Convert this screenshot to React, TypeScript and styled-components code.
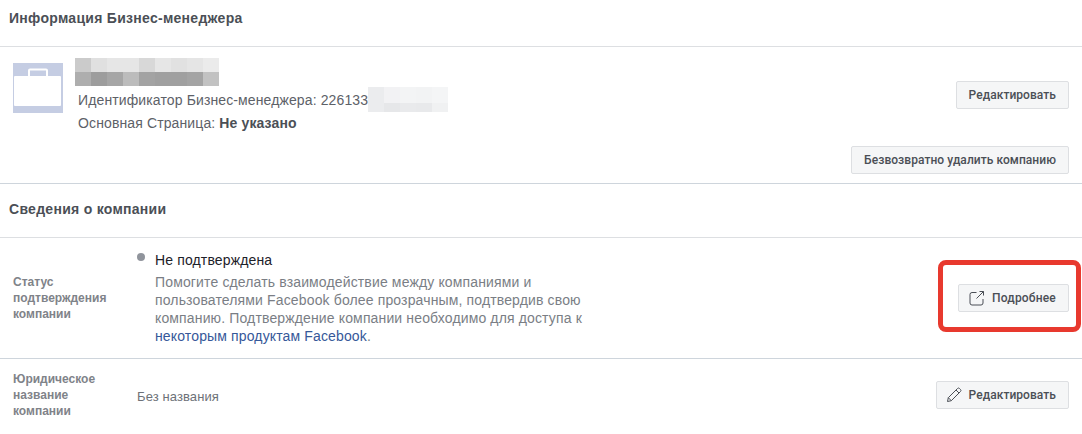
import {createGlobalStyle, styled} from 'styled-components';

const GlobalStyle = createGlobalStyle`
  html, body {
    margin: 0;
    padding: 0;
    background: #fff;
    overflow: hidden;
  }
  body {
    font-family: 'Liberation Sans', Arial, sans-serif;
    color: #4b4f56;
  }
`;

const Page = styled.div`
  width: 1082px;
  height: 434px;
  overflow: hidden;
`;

const SectionHeader = styled.div<{$height: number; $lift: number}>`
  height: ${({$height}) => $height}px;
  padding: 0 9px ${({$lift}) => $lift}px;
  display: flex;
  align-items: center;
  box-sizing: border-box;
  border-bottom: 1px solid #dddfe2;
  font-size: 14px;
  font-weight: 700;
  letter-spacing: 0.28px;
  color: #4b4f56;
`;

const InfoBlock = styled.div`
  height: 137px;
  box-sizing: border-box;
  border-bottom: 1px solid #ced5dc;
  padding: 11px 13px 0;
  display: flex;
  flex-direction: column;
`;

const InfoTop = styled.div`
  display: flex;
  align-items: flex-start;
`;

const Avatar = styled.div`
  width: 50px;
  height: 50px;
  margin-top: 5px;
  background: #c5cde3;
  display: flex;
  flex: none;
`;

const InfoText = styled.div`
  margin-left: 12px;
  flex: 1;
`;

const Mosaic = styled.div`
  display: flex;
  flex-direction: column;
  margin-bottom: 2px;
`;

const MosaicRow = styled.div`
  display: flex;
  height: 14px;
`;

const MosaicCell = styled.div<{$color: string}>`
  width: 16px;
  height: 100%;
  background: ${({$color}) => $color};
`;

const InfoLine = styled.div`
  margin-left: 3px;
  height: 23px;
  display: flex;
  align-items: center;
  font-size: 14px;
  letter-spacing: 0.12px;
  color: #5d6168;
  white-space: pre;

  b {
    font-weight: 700;
    color: #4b4f56;
  }
`;

const IdMask = styled.div`
  display: flex;
  flex-direction: column;
  margin-top: -1px;
`;

const MaskRow = styled.div<{$height: number}>`
  display: flex;
  height: ${({$height}) => $height}px;
`;

const MaskCell = styled.div<{$color: string}>`
  width: 16px;
  height: 100%;
  background: ${({$color}) => $color};
`;

const EditSlot = styled.div`
  margin-top: 23px;
  flex: none;
`;

const DeleteRow = styled.div`
  margin-top: 12px;
  display: flex;
  justify-content: flex-end;
`;

const Button = styled.div`
  height: 28px;
  box-sizing: border-box;
  padding: 0 12px;
  display: inline-flex;
  align-items: center;
  background: #f5f6f7;
  border: 1px solid #dddfe2;
  border-radius: 2px;
  font-family: Roboto, 'Liberation Sans', sans-serif;
  font-size: 12px;
  font-weight: 500;
  letter-spacing: 0.06px;
  color: #4b4f56;
  white-space: nowrap;
`;

const IconButton = styled(Button)<{$gap: number; $left: number; $spacing: number}>`
  gap: ${({$gap}) => $gap}px;
  padding-left: ${({$left}) => $left}px;
  letter-spacing: ${({$spacing}) => $spacing}px;
`;

const Row = styled.div<{$height: number; $border?: boolean}>`
  height: ${({$height}) => $height}px;
  box-sizing: border-box;
  padding: 0 13px;
  display: flex;
  align-items: center;
  border-bottom: ${({$border}) => ($border ? '1px solid #ced5dc' : 'none')};
`;

const RowLabel = styled.div`
  width: 124px;
  flex: none;
  font-size: 12px;
  font-weight: 700;
  line-height: 16px;
  color: #7f8389;
`;

const RowValue = styled.div`
  flex: 1;
  font-size: 14px;
  letter-spacing: 0.14px;
  color: #6d7178;
`;

const PlainValue = styled.div`
  flex: 1;
  margin-top: 3px;
  font-size: 13px;
  letter-spacing: 0.1px;
  color: #6d7178;
`;

const StatusLine = styled.div`
  display: flex;
  align-items: center;
  color: #1d2129;
  height: 18px;
  margin-bottom: 4px;
  margin-top: -1px;
`;

const Dot = styled.span`
  width: 8px;
  height: 8px;
  border-radius: 50%;
  background: #90949c;
  margin-right: 10px;
  margin-top: -6px;
`;

const Description = styled.div`
  margin-left: 18px;
  width: 450px;
  font-size: 14px;
  line-height: 18px;
  color: #7a7e85;
`;

const Link = styled.span`
  color: #365899;
`;

const HighlightWrap = styled.div`
  position: relative;
  margin-top: -1px;
`;

const Highlight = styled.div`
  position: absolute;
  top: -24px;
  bottom: -20px;
  left: -20px;
  right: -12px;
  border: 5px solid #e8392e;
  border-radius: 8px;
`;

const topCells = ['#cbcbcb', '#e0e0e0', '#e6e6e6', '#e6e6e6', '#d8d8d8', '#e6e6e6', '#e1e1e1', '#e5e5e5', '#ebebeb'];
const bottomCells = ['#aeaeae', '#9d9d9d', '#a6a6a6', '#bcbcbc', '#a3a3a3', '#a0a0a0', '#a0a0a0', '#a4a4a4', '#c2c2c2'];
const maskTop = ['#ebecee', '#f2f2f4', '#f3f4f5', '#f2f3f4', '#f4f5f6'];
const maskBottom = ['#ebecee', '#e6e7e9', '#e9eaec', '#e8e9eb', '#f0f1f2'];

function BriefcaseIcon() {
  return (
    <svg width="50" height="50" viewBox="0 0 50 50">
      <path d="M16 13V7.500a1 1 0 0 1 1-1h16a1 1 0 0 1 1 1V13" fill="none" stroke="#fff" strokeWidth="2" />
      <path d="M1 14a1 1 0 0 1 1-1h45a1 1 0 0 1 1 1v28a1 1 0 0 1-1 1H2a1 1 0 0 1-1-1z" fill="#fff" />
    </svg>
  );
}

function ExternalIcon() {
  return (
    <svg width="16" height="16" viewBox="0 0 16 16" fill="none" stroke="#4b4f56" strokeWidth="1">
      <path d="M7.500 2.500H3A2 2 0 0 0 1 4.500V13a2 2 0 0 0 2 2h9a2 2 0 0 0 2-2V9" />
      <path d="M7.500 8.500L14.500 1.500M10.500 1.500h4v4" />
    </svg>
  );
}

function PencilIcon() {
  return (
    <svg width="16" height="16" viewBox="0 0 16 16" fill="none" stroke="#4b4f56" strokeWidth="1">
      <path d="M1.500 14.500l.8-3.800L11.500 1.500a1.400 1.400 0 0 1 2 0l1 1a1.400 1.400 0 0 1 0 2L5.300 13.700z" />
      <path d="M2.300 10.700l3 3M10 3l3 3" />
    </svg>
  );
}

export default function App() {
  return (
    <Page>
      <GlobalStyle />
      <SectionHeader $height={47} $lift={10}>Информация Бизнес-менеджера</SectionHeader>
      <InfoBlock>
        <InfoTop>
          <Avatar>
            <BriefcaseIcon />
          </Avatar>
          <InfoText>
            <Mosaic>
              <MosaicRow>
                {topCells.map((c, i) => (
                  <MosaicCell key={i} $color={c} />
                ))}
              </MosaicRow>
              <MosaicRow>
                {bottomCells.map((c, i) => (
                  <MosaicCell key={i} $color={c} />
                ))}
              </MosaicRow>
            </Mosaic>
            <InfoLine>
              Идентификатор Бизнес-менеджера: 226133
              <IdMask>
                <MaskRow $height={16}>
                  {maskTop.map((c, i) => (
                    <MaskCell key={i} $color={c} />
                  ))}
                </MaskRow>
                <MaskRow $height={9}>
                  {maskBottom.map((c, i) => (
                    <MaskCell key={i} $color={c} />
                  ))}
                </MaskRow>
              </IdMask>
            </InfoLine>
            <InfoLine>
              Основная Страница: <b>Не указано</b>
            </InfoLine>
          </InfoText>
          <EditSlot>
            <Button>Редактировать</Button>
          </EditSlot>
        </InfoTop>
        <DeleteRow>
          <Button>Безвозвратно удалить компанию</Button>
        </DeleteRow>
      </InfoBlock>
      <SectionHeader $height={54} $lift={4}>Сведения о компании</SectionHeader>
      <Row $height={121} $border>
        <RowLabel>
          Статус
          <br />
          подтверждения
          <br />
          компании
        </RowLabel>
        <RowValue>
          <StatusLine>
            <Dot />
            Не подтверждена
          </StatusLine>
          <Description>
            Помогите сделать взаимодействие между компаниями и пользователями Facebook более прозрачным, подтвердив свою
            компанию. Подтверждение компании необходимо для доступа к <Link>некоторым продуктам Facebook</Link>.
          </Description>
        </RowValue>
        <HighlightWrap>
          <Highlight />
          <IconButton $gap={7} $left={10} $spacing={0.2}>
            <ExternalIcon />
            Подробнее
          </IconButton>
        </HighlightWrap>
      </Row>
      <Row $height={72}>
        <RowLabel>
          Юридическое
          <br />
          название
          <br />
          компании
        </RowLabel>
        <PlainValue>Без названия</PlainValue>
        <IconButton $gap={7} $left={9} $spacing={0.06}>
          <PencilIcon />
          Редактировать
        </IconButton>
      </Row>
    </Page>
  );
}
